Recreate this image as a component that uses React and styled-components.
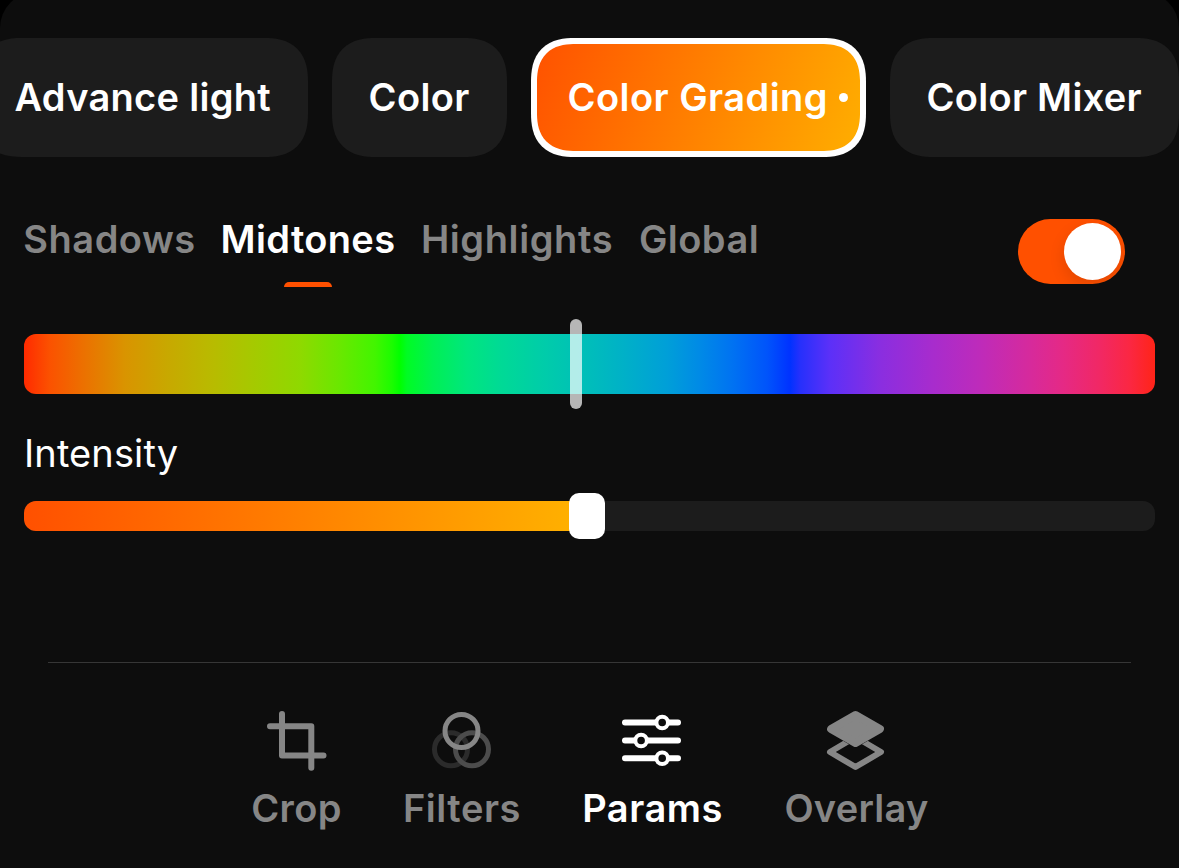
import React from "react";
import styled, { createGlobalStyle } from "styled-components";

const GlobalStyle = createGlobalStyle`
  * { box-sizing: border-box; }
  html, body { margin: 0; background: #000; }
  body { overflow: hidden; font-family: Inter, "Liberation Sans", sans-serif; }
  button { border: 0; padding: 0; background: none; font: inherit; color: inherit; }
`;

const Screen = styled.main`
  height: 868px;
  overflow: hidden;
  background: #000;
`;

const Panel = styled.section`
  display: flex;
  flex-direction: column;
  height: 876px;
  margin-top: -8px;
  padding-top: 46px;
  border-radius: 36px 36px 0 0;
  background: #0d0d0d;
  color: #fff;
`;

const ChipRow = styled.div`
  display: flex;
  gap: 24px;
  margin-left: -22px;
  height: 119px;
  flex: none;
`;

const Chip = styled.button`
  display: flex;
  flex: none;
  align-items: center;
  width: ${(p) => p.$width}px;
  padding-left: ${(p) => (p.$active ? 30.5 : 36.5)}px;
  border: ${(p) => (p.$active ? "6px solid #fff" : "0")};
  border-radius: 38px;
  background: ${(p) =>
    p.$active ? "linear-gradient(109.6deg, #ff5000, #ffb000) border-box" : "#1c1c1c"};
  @supports (corner-shape: superellipse(1.3)) {
    border-radius: 44px;
    corner-shape: superellipse(1.3);
  }
`;

const Label = styled.span`
  font-size: 38px;
  font-weight: ${(p) => p.$weight || 600};
  line-height: 41px;
  letter-spacing: ${(p) => p.$spacing || 0}px;
  white-space: nowrap;
`;

const Dot = styled.span`
  width: 9px;
  height: 9px;
  margin: 0 12px 0 auto;
  border-radius: 50%;
  background: #fff;
`;

const TabRow = styled.div`
  display: flex;
  flex: none;
  justify-content: space-between;
  align-items: flex-start;
  height: 68px;
  margin-top: 62px;
  padding: 0 54px 0 24px;
`;

const Tabs = styled.div`
  display: flex;
  gap: 26px;
  height: 68px;
`;

const Tab = styled.button`
  display: flex;
  flex-direction: column;
  justify-content: space-between;
  align-items: center;
  width: ${(p) => p.$width}px;
  color: ${(p) => (p.$active ? "#fff" : "#868686")};
`;

const Indicator = styled.span`
  width: 48px;
  height: 5px;
  border-radius: 6px 6px 0 0;
  background: #ff5000;
`;

const Toggle = styled.button`
  display: flex;
  justify-content: flex-end;
  align-items: center;
  width: 107px;
  height: 65px;
  padding-right: 4px;
  border-radius: 33px;
  background: #ff5000;
  overflow: hidden;
`;

const ToggleKnob = styled.span`
  width: 57px;
  height: 57px;
  border-radius: 50%;
  background: #fff;
  box-shadow: 0 6px 16px rgba(0, 0, 0, 0.12);
`;

const HueSlider = styled.div`
  position: relative;
  display: flex;
  flex: none;
  align-items: center;
  height: 90px;
  margin: 32px 24px 0;
`;

const HueTrack = styled.div`
  width: 100%;
  height: 60px;
  border-radius: 12px;
`;

const HueMarker = styled.span`
  position: absolute;
  left: 546px;
  top: 0;
  width: 12px;
  height: 90px;
  border-radius: 6px;
  background: rgba(255, 255, 255, 0.7);
`;

const FieldLabel = styled.div`
  display: flex;
  flex: none;
  align-items: center;
  height: 47px;
  margin: 21px 0 0 24px;
`;

const Slider = styled.div`
  position: relative;
  display: flex;
  flex: none;
  align-items: center;
  height: 46px;
  margin: 16px 24px 0;
`;

const Track = styled.div`
  width: 100%;
  height: 30px;
  border-radius: 12px;
  background: #1c1c1c;
  overflow: hidden;
`;

const Fill = styled.div`
  width: 563px;
  height: 30px;
  background: linear-gradient(93deg, #ff5000, #ffb000 548px);
`;

const Thumb = styled.span`
  position: absolute;
  left: 545px;
  top: 0;
  width: 36px;
  height: 46px;
  border-radius: 10px;
  background: #fff;
`;

const Divider = styled.hr`
  flex: none;
  width: 1083px;
  height: 1px;
  margin: 123px auto 0;
  border: 0;
  background: #363636;
`;

const Nav = styled.nav`
  display: flex;
  justify-content: center;
  gap: 61px;
  margin-top: 48px;
`;

const NavItem = styled.button`
  display: flex;
  flex-direction: column;
  align-items: center;
  gap: 17px;
  width: ${(p) => p.$width}px;
  color: ${(p) => (p.$active ? "#fff" : "#868686")};
`;

const Icon = styled.svg`
  display: block;
  width: 60px;
  height: 60px;
  flex: none;
  overflow: visible;
`;

const CropIcon = () => (
  <Icon viewBox="0 0 60 60" fill="none" stroke="currentColor" strokeWidth="6" strokeLinecap="round" strokeLinejoin="round">
    <path d="M15 3V44.5H56.5M3 15.2H44.3V56.8" />
  </Icon>
);

const FiltersIcon = () => (
  <Icon viewBox="0 0 60 60" fill="none" strokeWidth="5">
    <circle cx="19" cy="38.3" r="16.5" stroke="#2b2b2b" />
    <circle cx="40" cy="38.3" r="16.5" stroke="#4c4c4c" />
    <circle cx="29.5" cy="20" r="16.5" stroke="#868686" />
  </Icon>
);

const ParamsIcon = () => (
  <Icon viewBox="0 0 60 60" fill="#0d0d0d" stroke="currentColor" strokeWidth="6" strokeLinecap="round">
    <path d="M2 11.5H55M2 29.5H55M2 47.3H55" />
    <g strokeWidth="4">
      <circle cx="39.2" cy="11.5" r="5.8" />
      <circle cx="18.1" cy="29.5" r="5.8" />
      <circle cx="39.2" cy="47.3" r="5.8" />
    </g>
  </Icon>
);

const OverlayIcon = () => (
  <Icon viewBox="0 0 60 60" stroke="currentColor" strokeLinejoin="round">
    <path d="M28.5 26L54 41L28.5 56L3 41Z" fill="none" strokeWidth="6" />
    <path d="M28.5 4L52.9 18L28.5 32L4.1 18Z" fill="none" stroke="#0d0d0d" strokeWidth="8.4" />
    <path d="M28.5 4L52.9 18L28.5 32L4.1 18Z" fill="currentColor" strokeWidth="8" />
  </Icon>
);

const CHIPS = [
  { label: "Advance light", width: 330, spacing: 0.29 },
  { label: "Color", width: 175, spacing: 0.4 },
  { label: "Color Grading", width: 335, spacing: 0.46, active: true },
  { label: "Color Mixer", width: 289, spacing: 0.29 },
];

const TABS = [
  { label: "Shadows", width: 171, spacing: 0.5 },
  { label: "Midtones", width: 174, spacing: 0.35, active: true },
  { label: "Highlights", width: 192, spacing: 0.6 },
  { label: "Global", width: 120, spacing: 0.45 },
];

const NAV = [
  { label: "Crop", width: 92, spacing: 0.4, icon: CropIcon },
  { label: "Filters", width: 117, spacing: 0.55, icon: FiltersIcon },
  { label: "Params", width: 142, spacing: 0.5, icon: ParamsIcon, active: true },
  { label: "Overlay", width: 144, spacing: 0.25, icon: OverlayIcon },
];

const HUE_STOPS = [
  [0, "#ff2a00"], [26, "#fb5200"], [59, "#ec7000"], [101, "#d99400"],
  [143, "#c8a800"], [189, "#b8bb00"], [234, "#a3cb00"], [276, "#8fd900"],
  [316, "#69e800"], [351, "#42f500"], [368, "#1cfc00"], [376, "#00ff00"],
  [383, "#00fc24"], [409, "#00f054"], [443, "#00e67e"], [476, "#00da95"],
  [521, "#00ccaa"], [566, "#00bdbb"], [596, "#00b2c6"], [643, "#009fd8"],
  [676, "#008ae6"], [709, "#0072f2"], [743, "#0054fb"], [766, "#0032ff"],
  [776, "#2630fc"], [806, "#5c30f8"], [856, "#8a2ee0"], [906, "#a62cce"],
  [956, "#be2bba"], [1006, "#d62a9c"], [1039, "#e52985"], [1076, "#f12864"],
  [1106, "#fb2742"], [1131, "#ff2418"],
];

const hueGradient = `linear-gradient(90deg, ${HUE_STOPS.map(([x, c]) => `${c} ${x}px`).join(", ")})`;

export default function App() {
  return (
    <Screen>
      <GlobalStyle />
      <Panel>
        <ChipRow>
          {CHIPS.map((c) => (
            <Chip key={c.label} $width={c.width} $active={c.active}>
              <Label $spacing={c.spacing}>{c.label}</Label>
              {c.active && <Dot />}
            </Chip>
          ))}
        </ChipRow>
        <TabRow>
          <Tabs>
            {TABS.map((t) => (
              <Tab key={t.label} $width={t.width} $active={t.active}>
                <Label $spacing={t.spacing}>{t.label}</Label>
                {t.active && <Indicator />}
              </Tab>
            ))}
          </Tabs>
          <Toggle role="switch" aria-checked="true" aria-label="Color grading">
            <ToggleKnob />
          </Toggle>
        </TabRow>
        <HueSlider>
          <HueTrack style={{ background: hueGradient }} />
          <HueMarker />
        </HueSlider>
        <FieldLabel>
          <Label $weight={400} $spacing={0.12}>Intensity</Label>
        </FieldLabel>
        <Slider>
          <Track>
            <Fill />
          </Track>
          <Thumb />
        </Slider>
        <Divider />
        <Nav>
          {NAV.map((n) => (
            <NavItem key={n.label} $width={n.width} $active={n.active}>
              <n.icon />
              <Label $spacing={n.spacing}>{n.label}</Label>
            </NavItem>
          ))}
        </Nav>
      </Panel>
    </Screen>
  );
}
